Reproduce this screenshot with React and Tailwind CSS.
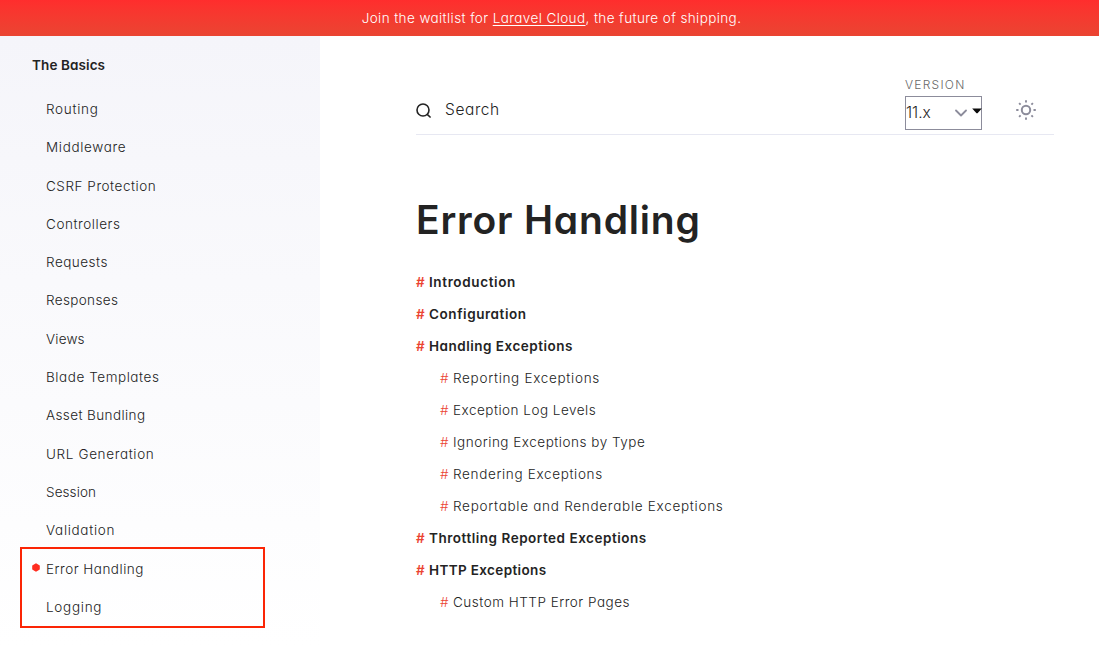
import React from "react";

const topics = [
  { label: "Routing", track: "tracking-[0.7px]" },
  { label: "Middleware", track: "tracking-[0.67px]" },
  { label: "CSRF Protection", track: "tracking-[0.54px]" },
  { label: "Controllers", track: "tracking-[0.55px]" },
  { label: "Requests", track: "tracking-[0.5px]" },
  { label: "Responses", track: "tracking-[0.36px]" },
  { label: "Views", track: "tracking-[0.2px]" },
  { label: "Blade Templates", track: "tracking-[0.56px]" },
  { label: "Asset Bundling", track: "tracking-[0.4px]" },
  { label: "URL Generation", track: "tracking-[0.64px]" },
  { label: "Session", track: "tracking-[0.1px]" },
  { label: "Validation", track: "tracking-[0.68px]" },
  { label: "Error Handling", track: "tracking-[0.5px]", active: true },
  { label: "Logging", track: "tracking-[0.72px]" },
];

const contents = [
  { label: "Introduction", track: "tracking-[0.63px]" },
  { label: "Configuration", track: "tracking-[0.57px]" },
  { label: "Handling Exceptions", track: "tracking-[0.5px]" },
  { label: "Reporting Exceptions", track: "tracking-[0.7px]", nested: true },
  { label: "Exception Log Levels", track: "tracking-[0.5px]", nested: true },
  { label: "Ignoring Exceptions by Type", track: "tracking-[0.52px]", nested: true },
  { label: "Rendering Exceptions", track: "tracking-[0.66px]", nested: true },
  { label: "Reportable and Renderable Exceptions", track: "tracking-[0.72px]", nested: true },
  { label: "Throttling Reported Exceptions", track: "tracking-[0.52px]" },
  { label: "HTTP Exceptions", track: "tracking-[0.36px]" },
  { label: "Custom HTTP Error Pages", track: "tracking-[0.5px]", nested: true },
];

function Banner() {
  return (
    <div className="flex h-9 shrink-0 items-center justify-center bg-linear-to-b from-[#ff2d2d] to-[#ea4432] pl-1 text-[13.5px] text-white">
      <p className="font-light tracking-[0.4px] whitespace-nowrap">
        Join the waitlist for <a className="underline underline-offset-2">Laravel Cloud</a>, the future of shipping.
      </p>
    </div>
  );
}

function Sidebar() {
  return (
    <aside className="relative w-80 shrink-0 bg-linear-to-b from-[#f5f5fa] to-white pt-[19px]">
      <h2 className="pl-8 text-[13.5px] leading-5 font-semibold tracking-[0.1px]">The Basics</h2>
      <ul className="mt-[14.8px]">
        {topics.map((t) => (
          <li key={t.label} className="flex h-[38.3px] items-center pl-8 text-[13.5px] leading-5 font-[350]">
            <span className="w-[14px] shrink-0">
              {t.active && (
                <svg width="8" height="9" viewBox="0 0 8 9" className="-mt-[2px] block" fill="#ff2d20">
                  <path d="M4 .3 7.4 2.3Q7.8 2.5 7.8 3v3q0 .5-.4.7L4 8.7.6 6.7Q.2 6.500.2 6V3q0-.5.4-.7Z" />
                </svg>
              )}
            </span>
            <span className={t.track}>{t.label}</span>
          </li>
        ))}
      </ul>
      <div className="absolute top-[511px] left-5 h-[81px] w-[245px] border-2 border-[#fb2505]" />
    </aside>
  );
}

function Toolbar() {
  return (
    <header className="flex h-[99px] w-[638px] border-b border-[#e7e8f2]">
      <div className="flex flex-1 items-center pt-[49px]">
        <svg width="16" height="16" viewBox="0 0 16 16" fill="none" stroke="#232323" strokeWidth="1.6" className="mt-[2px]">
          <circle cx="7" cy="7" r="6" />
          <path d="m11.200 11.300 3.400 3.200" />
        </svg>
        <span className="mt-px ml-[13px] text-[15.5px] leading-6 font-[350] tracking-[0.6px]">Search</span>
      </div>
      <div className="w-[77px] pt-[41px]">
        <div className="text-xs leading-4 font-light tracking-[1.25px] text-[#686868]">VERSION</div>
        <div className="mt-[3px] flex h-[34px] items-center border border-[#8c8c9b]">
          <span className="w-[49px] shrink-0 text-[15.5px] leading-6 font-[350]">11.x</span>
          <svg width="12" height="8" viewBox="0 0 12 8" fill="none" stroke="#8c8c9b" strokeWidth="1.800" strokeLinecap="round" strokeLinejoin="round" className="shrink-0">
            <path d="m1 1.500 5 5 5-5" />
          </svg>
          <svg width="10" height="6" viewBox="0 0 10 6" className="-mt-[4px] -mr-1 ml-[5px] shrink-0" fill="#0b0b0b">
            <path d="M.2.500h9.600L5.500 5.300H4.500Z" />
          </svg>
        </div>
      </div>
      <div className="w-[72px] pt-[64px] pl-[34px]">
        <svg width="20" height="20" viewBox="0 0 20 20" fill="none" stroke="#8c8c9b" strokeWidth="1.900">
          <circle cx="10" cy="10" r="4.200" strokeWidth="2" />
          <path d="M10 .2v2.300M10 17.500v2.300M.2 10h2.300M17.500 10h2.300M3.100 3.100 4.600 4.600M15.400 15.400l1.500 1.500M3.100 16.900l1.500-1.500M15.400 4.600l1.500-1.500" />
        </svg>
      </div>
    </header>
  );
}

function Article() {
  return (
    <article className="pt-[60px]">
      <h1 className="text-[39px] leading-[50px] font-semibold tracking-[0.8px]">Error Handling</h1>
      <ul className="mt-[21px]">
        {contents.map((c) => (
          <li
            key={c.label}
            className={
              c.nested
                ? "flex h-8 items-center pl-6 text-[13.5px] leading-5 font-[350]"
                : "flex h-8 items-center text-[13.5px] leading-5 font-semibold"
            }
          >
            <span className="w-[13px] text-[#eb4432]">#</span>
            <span className={c.track}>{c.label}</span>
          </li>
        ))}
      </ul>
    </article>
  );
}

export default function App() {
  return (
    <div className="flex h-[646px] w-[1099px] flex-col overflow-hidden bg-white font-['Inter',sans-serif] text-[#232323] [font-feature-settings:'cv11'_1]">
      <Banner />
      <div className="flex min-h-0 flex-1">
        <Sidebar />
        <main className="flex-1 pl-24">
          <Toolbar />
          <Article />
        </main>
      </div>
    </div>
  );
}
